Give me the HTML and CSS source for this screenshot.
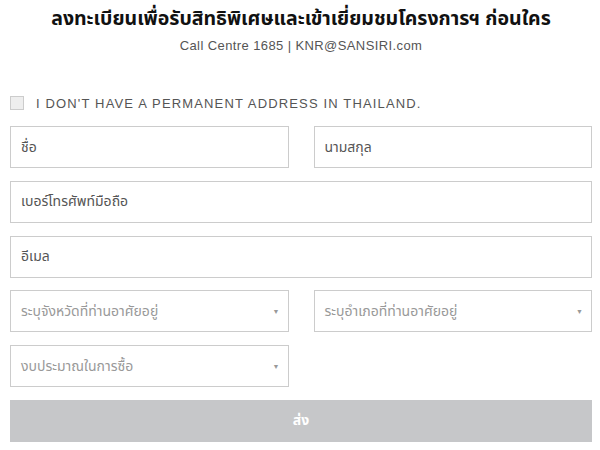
FILE: index.html
```html
<!DOCTYPE html>
<html lang="th">
<head>
  <meta charset="UTF-8" />
  <meta name="viewport" content="width=device-width, initial-scale=1" />
  <title>ลงทะเบียน</title>
  <link rel="stylesheet" href="styles.css">
</head>
<body>
  <header class="head">
    <h1>ลงทะเบียนเพื่อรับสิทธิพิเศษและเข้าเยี่ยมชมโครงการฯ ก่อนใคร</h1>
    <p class="contact">Call Centre 1685 | KNR@SANSIRI.com</p>
  </header>

  <form class="reg-form">
    <label class="check-row">
      <span class="check-box"></span>
      <span class="check-label">I DON'T HAVE A PERMANENT ADDRESS IN THAILAND.</span>
    </label>

    <div class="row two">
      <div class="field">ชื่อ</div>
      <div class="field">นามสกุล</div>
    </div>
    <div class="row">
      <div class="field">เบอร์โทรศัพท์มือถือ</div>
    </div>
    <div class="row">
      <div class="field">อีเมล</div>
    </div>
    <div class="row two">
      <div class="field select">ระบุจังหวัดที่ท่านอาศัยอยู่<span class="arrow">▼</span></div>
      <div class="field select">ระบุอำเภอที่ท่านอาศัยอยู่<span class="arrow">▼</span></div>
    </div>
    <div class="row two">
      <div class="field select">งบประมาณในการซื้อ<span class="arrow">▼</span></div>
    </div>

    <button type="button" class="send">ส่ง</button>
  </form>
</body>
</html>
```

FILE: styles.css
```css
body {
  margin: 0;
  padding: 0 8px 0 10px;
  font-family: "Liberation Sans", "Noto Sans Thai", "Noto Sans", sans-serif;
  color: #555;
  background: #fff;
}
.head {
  text-align: center;
}
.head h1 {
  margin: 0;
  padding-top: 4px;
  font-size: 19.5px;
  line-height: 28px;
  font-weight: bold;
  color: #111;
}
.contact {
  margin: 6px 0 0;
  font-size: 13px;
  line-height: 16px;
  letter-spacing: 0.4px;
  color: #555;
}
.reg-form {
  margin-top: 40px;
}
.check-row {
  display: flex;
  align-items: center;
  gap: 12px;
  height: 18px;
  margin-bottom: 14px;
}
.check-box {
  width: 12px;
  height: 12px;
  border: 1px solid #ccc;
  background: #eee;
}
.check-label {
  font-size: 13px;
  letter-spacing: 1.15px;
  color: #555;
}
.row {
  display: grid;
  grid-template-columns: 1fr;
  margin-bottom: 12.8px;
}
.row.two {
  grid-template-columns: 1fr 1fr;
  column-gap: 25px;
}
.field {
  display: flex;
  align-items: center;
  justify-content: space-between;
  height: 42px;
  box-sizing: border-box;
  padding: 0 10px;
  border: 1px solid #ccc;
  font-size: 14px;
  color: #555;
}
.field.select {
  color: #999;
}
.arrow {
  font-size: 7px;
  color: #999;
  margin-right: -2px;
}
.send {
  display: block;
  width: 100%;
  height: 42px;
  border: none;
  background: #c6c7c9;
  color: #fff;
  font-family: inherit;
  font-size: 14px;
  font-weight: bold;
}
```
